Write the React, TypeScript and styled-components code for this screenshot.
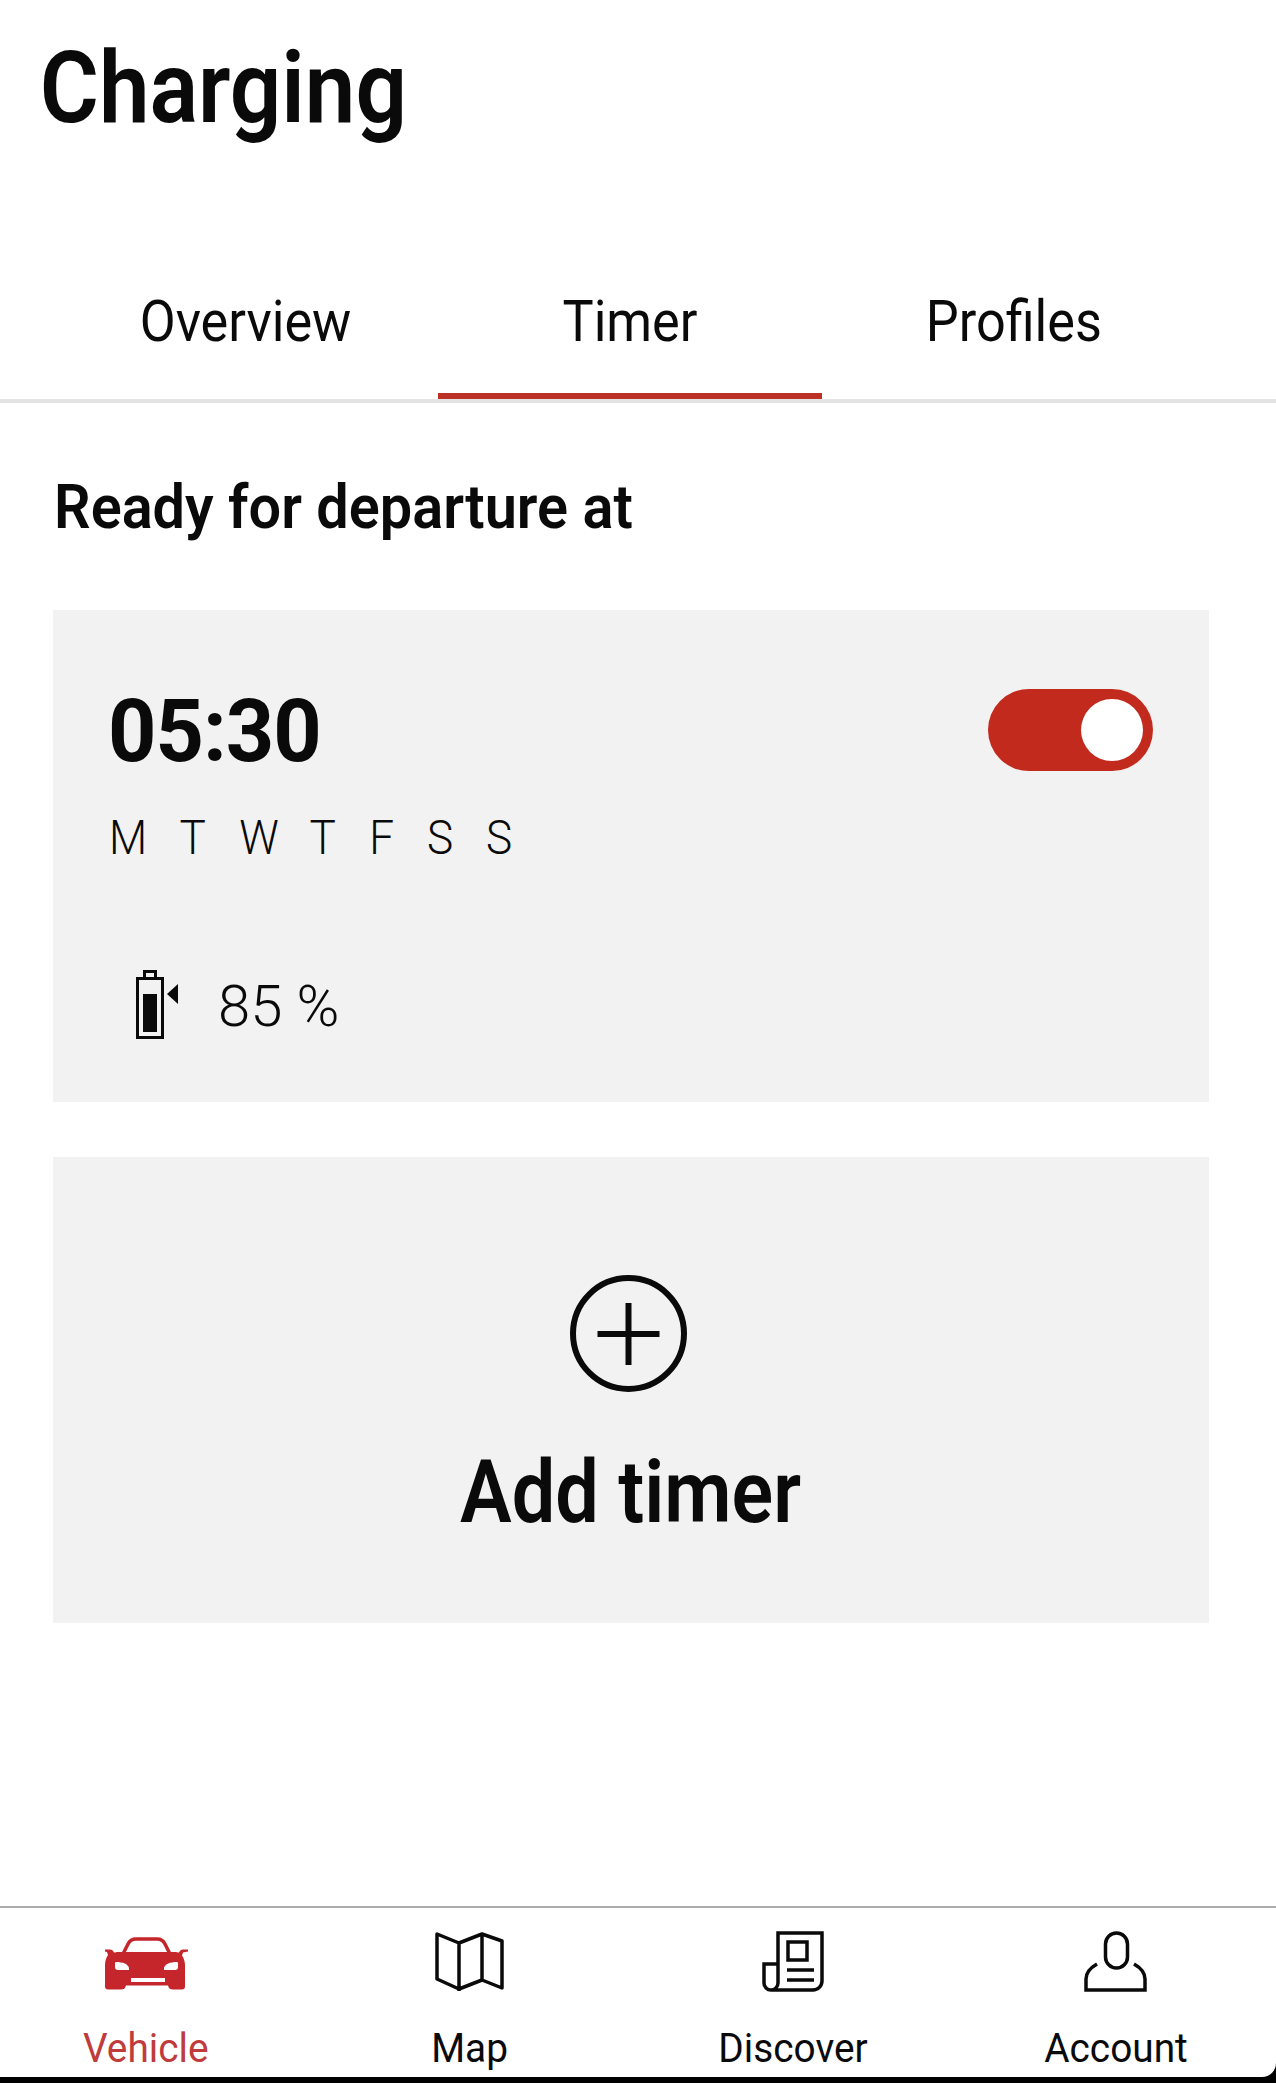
import styled, { createGlobalStyle } from 'styled-components';

const GlobalStyle = createGlobalStyle`
    html, body {
        margin: 0;
        padding: 0;
        background: #000;
    }

    body {
        font-family: Roboto, "Liberation Sans", sans-serif;
        color: #0a0a0a;
    }
`;

const Page = styled.div`
    width: 1276px;
    height: 2083px;
    box-sizing: border-box;
    padding-bottom: 6px;
    display: flex;
    flex-direction: column;
    background: #000;
    overflow: hidden;
`;

const Main = styled.main`
    flex: 1;
    background: #fff;
`;

const Title = styled.h1`
    margin: 0;
    padding: 38px 0 0 44px;
    font-size: 100px;
    line-height: 100px;
    font-weight: 600;
    transform: scaleX(0.905);
    transform-origin: left;
`;

const Tabs = styled.nav`
    display: grid;
    grid-template-columns: repeat(3, 384px);
    padding-left: 54px;
    margin-top: 154px;
    border-bottom: 4px solid #e4e4e4;
`;

const Tab = styled.div<{ $active?: boolean }>`
    height: 101px;
    text-align: center;
    font-size: 58px;
    line-height: 58px;
    font-weight: 400;
    border-bottom: 6px solid ${({ $active }) => ($active ? '#bc3126' : 'transparent')};
`;

const TabLabel = styled.span`
    display: inline-block;
    transform: scaleX(0.9);
`;

const SectionTitle = styled.h2`
    margin: 73px 0 72px 54px;
    font-size: 62px;
    line-height: 62px;
    font-weight: 600;
    transform: scaleX(0.93);
    transform-origin: left;
`;

const Card = styled.section`
    width: 1156px;
    margin-left: 53px;
    background: #f2f2f2;
`;

const TimerCard = styled(Card)`
    height: 492px;
    padding: 79px 56px 0 55px;
    box-sizing: border-box;
`;

const TimeRow = styled.div`
    display: flex;
    justify-content: space-between;
    align-items: center;
    height: 82px;
`;

const Time = styled.div`
    padding-top: 2px;
    font-size: 88px;
    line-height: 82px;
    font-weight: 700;
    letter-spacing: -1px;
    transform: scaleX(0.96);
    transform-origin: left;
`;

const Toggle = styled.div`
    width: 165px;
    height: 82px;
    box-sizing: border-box;
    padding: 10px;
    display: flex;
    justify-content: flex-end;
    border-radius: 41px;
    background: #c32a1e;
`;

const Knob = styled.div`
    width: 62px;
    height: 62px;
    border-radius: 50%;
    background: #fff;
`;

const Days = styled.div`
    display: flex;
    margin: 42px 0 0 -12px;
    font-size: 49px;
    line-height: 49px;
    font-weight: 300;
`;

const Day = styled.span<{ $width: number }>`
    display: block;
    width: ${({ $width }) => $width}px;
    text-align: center;
    transform: scaleX(0.9);
`;

const ChargeRow = styled.div`
    display: flex;
    align-items: center;
    margin-top: 108px;
    padding-left: 28px;
    height: 69px;
`;

const ChargeLevel = styled.span`
    margin: 3px 0 0 38px;
    font-size: 58px;
    line-height: 58px;
    font-weight: 300;
`;

const AddCard = styled(Card)`
    height: 466px;
    margin-top: 55px;
    padding: 118px 6px 0 0;
    box-sizing: border-box;
    display: flex;
    flex-direction: column;
    align-items: center;
`;

const AddLabel = styled.div`
    margin: 57px 0 0 6px;
    font-size: 87px;
    line-height: 87px;
    font-weight: 600;
    transform: scaleX(0.89);
`;

const BottomNav = styled.nav`
    height: 171px;
    box-sizing: border-box;
    padding: 23px 60px 0 46px;
    display: flex;
    justify-content: space-between;
    background: #fff;
    border-top: 2px solid #ababab;
    border-bottom-right-radius: 14px;
`;

const NavItem = styled.div<{ $active?: boolean }>`
    width: 200px;
    display: flex;
    flex-direction: column;
    align-items: center;
    color: ${({ $active }) => ($active ? '#bf3b3c' : '#0a0a0a')};
`;

const NavIcon = styled.svg`
    display: block;
    height: 61px;
`;

const NavLabel = styled.span`
    display: block;
    margin-top: 37px;
    font-size: 40px;
    line-height: 40px;
    font-weight: 400;
    transform: scaleX(0.97);
`;

const DAYS = [
    { label: 'M', width: 64 },
    { label: 'T', width: 65.5 },
    { label: 'W', width: 66 },
    { label: 'T', width: 61.5 },
    { label: 'F', width: 57.5 },
    { label: 'S', width: 58 },
    { label: 'S', width: 60 },
];

const BatteryIcon = () => (
    <svg width="44" height="69" viewBox="0 0 44 69">
        <path d="M1.5 8.5h25v59h-25z M8.5 8.5v-7h11v7" fill="none" stroke="#0a0a0a" strokeWidth="3" />
        <rect x="7" y="24" width="14" height="38" fill="#0a0a0a" />
        <path d="M42 14v20L31 24z" fill="#0a0a0a" />
    </svg>
);

const AddIcon = () => (
    <svg width="117" height="117" viewBox="0 0 117 117">
        <circle cx="58.5" cy="58.5" r="55.5" fill="none" stroke="#0a0a0a" strokeWidth="6" />
        <path d="M58.5 28v62M27.5 59h62" fill="none" stroke="#0a0a0a" strokeWidth="6" />
    </svg>
);

const CarIcon = () => (
    <NavIcon width="83" viewBox="0 0 83 61">
        <path d="M18 23l5-10c2-4 5-5 8-5h21c3 0 6 1 8 5l5 10" fill="none" stroke="#c4262b" strokeWidth="3.5" />
        <path
            fill="#c4262b"
            fillRule="evenodd"
            d="M0 18.5h5c2 0 3 1 4 3h1l2-0.5h59l2 0.5h1c1-2 2-3 4-3h5v2l-5 1-1 3c2 3 3 6 3 10v21c0 2-1 3-3 3h-9c-3 0-4-1-5-4H21c-1 3-2 4-5 4H3c-2 0-3-1-3-3V34c0-4 1-7 3-10l-1-3-2-0.5zM11 31c-1 0-1 1-1 2v3c0 2 1 3 3 3h11v-2c-1-4-6-6-13-6zM72 31c-7 0-12 2-13 6v2h11c2 0 3-1 3-3v-3c0-1 0-2-1-2zM26 47v4h34v-4z"
        />
    </NavIcon>
);

const MapIcon = () => (
    <NavIcon width="69" viewBox="0 0 69 61">
        <path
            d="M2 3l22 9 23-9 20 7v47l-20-8-23 9-22-10zM24 12v48M47 3v46"
            fill="none"
            stroke="#0a0a0a"
            strokeWidth="3.5"
            strokeLinejoin="round"
        />
    </NavIcon>
);

const DiscoverIcon = () => (
    <NavIcon width="62" viewBox="0 0 62 61">
        <path
            d="M16 52V2h44v48a9 9 0 0 1-9 9H9a7 7 0 0 1-7-7V33h14M16 52a7 7 0 0 1-7 7M26 11h19v18H26zM25 39h27M25 49h27"
            fill="none"
            stroke="#0a0a0a"
            strokeWidth="3.5"
        />
    </NavIcon>
);

const AccountIcon = () => (
    <NavIcon width="63" viewBox="0 0 63 61">
        <rect x="21.5" y="2" width="22" height="35" rx="11" fill="none" stroke="#0a0a0a" strokeWidth="3.5" />
        <path d="M13 33C6 37 2 42 2 48v11h59V48c0-6-4-11-11-15" fill="none" stroke="#0a0a0a" strokeWidth="3.5" />
    </NavIcon>
);

const App = () => (
    <Page>
        <GlobalStyle />
        <Main>
            <Title>Charging</Title>
            <Tabs>
                <Tab><TabLabel>Overview</TabLabel></Tab>
                <Tab $active><TabLabel>Timer</TabLabel></Tab>
                <Tab><TabLabel>Profiles</TabLabel></Tab>
            </Tabs>
            <SectionTitle>Ready for departure at</SectionTitle>
            <TimerCard>
                <TimeRow>
                    <Time>05:30</Time>
                    <Toggle><Knob /></Toggle>
                </TimeRow>
                <Days>
                    {DAYS.map((day, index) => (
                        <Day key={index} $width={day.width}>{day.label}</Day>
                    ))}
                </Days>
                <ChargeRow>
                    <BatteryIcon />
                    <ChargeLevel>85 %</ChargeLevel>
                </ChargeRow>
            </TimerCard>
            <AddCard>
                <AddIcon />
                <AddLabel>Add timer</AddLabel>
            </AddCard>
        </Main>
        <BottomNav>
            <NavItem $active><CarIcon /><NavLabel>Vehicle</NavLabel></NavItem>
            <NavItem><MapIcon /><NavLabel>Map</NavLabel></NavItem>
            <NavItem><DiscoverIcon /><NavLabel>Discover</NavLabel></NavItem>
            <NavItem><AccountIcon /><NavLabel>Account</NavLabel></NavItem>
        </BottomNav>
    </Page>
);

export default App;
